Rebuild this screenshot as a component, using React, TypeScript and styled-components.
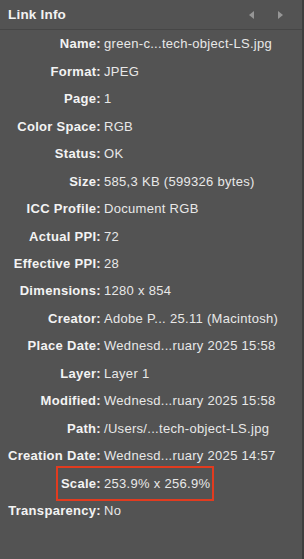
import styled, { createGlobalStyle } from 'styled-components'

const GlobalStyle = createGlobalStyle`
  html, body {
    margin: 0;
    padding: 0;
    background: #535353;
  }
  body {
    font-family: "Liberation Sans", Arial, sans-serif;
  }
`

type Field = { label: string; value: string; marked?: boolean }

const fields: Field[] = [
  { label: 'Name', value: 'green-c...tech-object-LS.jpg' },
  { label: 'Format', value: 'JPEG' },
  { label: 'Page', value: '1' },
  { label: 'Color Space', value: 'RGB' },
  { label: 'Status', value: 'OK' },
  { label: 'Size', value: '585,3 KB (599326 bytes)' },
  { label: 'ICC Profile', value: 'Document RGB' },
  { label: 'Actual PPI', value: '72' },
  { label: 'Effective PPI', value: '28' },
  { label: 'Dimensions', value: '1280 x 854' },
  { label: 'Creator', value: 'Adobe P... 25.11 (Macintosh)' },
  { label: 'Place Date', value: 'Wednesd...ruary 2025 15:58' },
  { label: 'Layer', value: 'Layer 1' },
  { label: 'Modified', value: 'Wednesd...ruary 2025 15:58' },
  { label: 'Path', value: '/Users/...tech-object-LS.jpg' },
  { label: 'Creation Date', value: 'Wednesd...ruary 2025 14:57' },
  { label: 'Scale', value: '253.9% x 256.9%', marked: true },
  { label: 'Transparency', value: 'No' },
]

function App() {
  return (
    <Panel>
      <GlobalStyle />
      <Header>
        <Title>Link Info</Title>
        <Nav>
          <Arrow viewBox="0 0 5 8" aria-label="previous">
            <path d="M5 0 L0 4 L5 8 Z" />
          </Arrow>
          <Arrow viewBox="0 0 5 8" aria-label="next">
            <path d="M0 0 L5 4 L0 8 Z" />
          </Arrow>
        </Nav>
      </Header>
      <List>
        {fields.map((f) => (
          <Row key={f.label}>
            <Label>{f.label}:</Label>
            <Value>
              {f.marked ? <Marked>{f.value}</Marked> : f.value}
            </Value>
          </Row>
        ))}
      </List>
    </Panel>
  )
}

const Panel = styled.div`
  width: 304px;
  height: 559px;
  box-sizing: border-box;
  background: #535353;
  border-right: 2px solid #3e3e3e;
  display: flex;
  flex-direction: column;
  overflow: hidden;
`

const Header = styled.div`
  height: 29px;
  flex: none;
  display: flex;
  align-items: center;
  justify-content: space-between;
  padding: 0 19px 0 8px;
  border-bottom: 1px solid #464646;
`

const Title = styled.div`
  font-weight: bold;
  font-size: 13.5px;
  letter-spacing: 0.2px;
  color: #f2f2f2;
`

const Nav = styled.div`
  display: flex;
  gap: 24px;
  align-items: center;
`

const Arrow = styled.svg`
  width: 5px;
  height: 8px;
  fill: #969696;
`

const List = styled.div`
  display: grid;
  grid-auto-rows: 27.47px;
`

const Row = styled.div`
  display: grid;
  grid-template-columns: 101px 1fr;
  column-gap: 3px;
  align-items: center;
  font-size: 13px;
  letter-spacing: 0.3px;
  white-space: nowrap;
`

const Label = styled.div`
  text-align: right;
  font-weight: bold;
  color: #f3f3f3;
`

const Value = styled.div`
  color: #e8e8e8;
`

const Marked = styled.span`
  position: relative;
  &::before {
    content: '';
    position: absolute;
    left: -48px;
    right: -4px;
    top: -10px;
    bottom: -10px;
    border: 2px solid #e23b1f;
    pointer-events: none;
  }
`

export default App
